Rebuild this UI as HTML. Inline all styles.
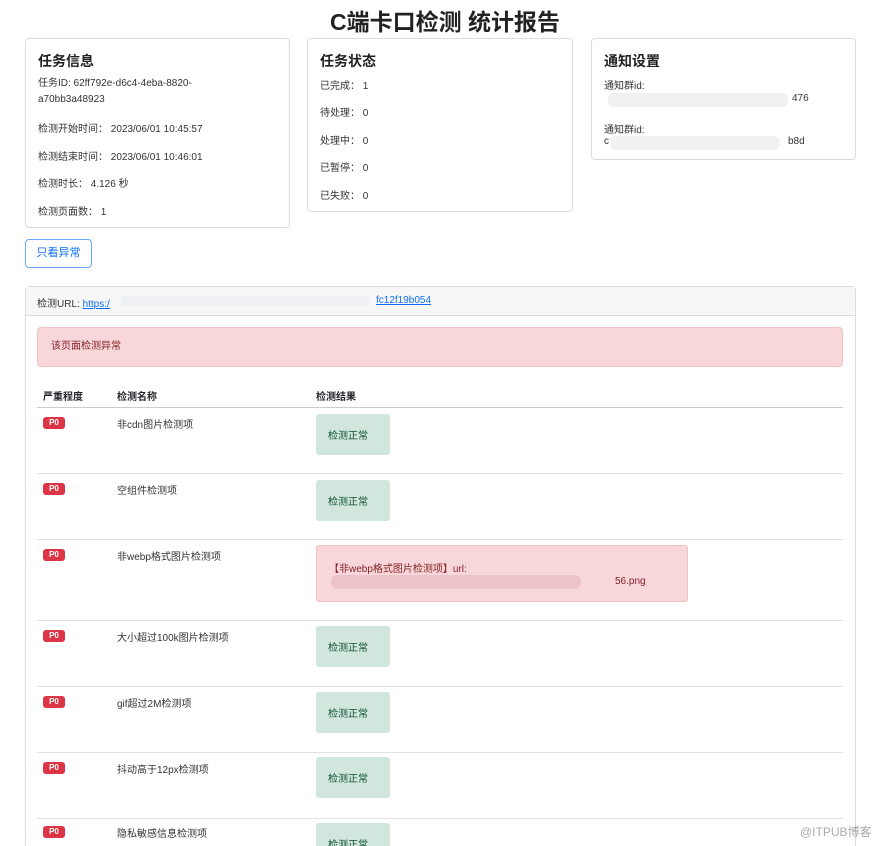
<!DOCTYPE html>
<html><head><meta charset="utf-8"><style>
*{box-sizing:border-box;margin:0;padding:0}
html,body{width:890px;height:846px;overflow:hidden}
body{background:#fff;font-family:"Liberation Sans","Noto Sans CJK SC",sans-serif;color:#212529;position:relative;font-size:10px}
.a{position:absolute;white-space:nowrap}
.card{position:absolute;border:1px solid #dcdcdc;border-radius:4px;background:#fff}
h1{position:absolute;left:0;width:890px;text-align:center;top:3px;font-size:23px;font-weight:bold;color:#222}
h2{font-size:14px;font-weight:bold;color:#222;position:absolute;left:12px;top:12px}
.t{font-size:10px;color:#333}
.line{position:absolute;left:37px;width:806px;height:1px;background:#e2e2e2}
.badge{position:absolute;left:43px;width:22px;height:12px;background:#dc3545;color:#fff;border-radius:3px;font-size:8px;font-weight:bold;text-align:center;line-height:12px}
.ok{position:absolute;left:316px;width:74px;height:41px;background:#d1e7dd;border-radius:3px;color:#0f5132;font-size:10px;display:flex;align-items:center;padding-left:12px}
.blur{position:absolute;background:#f1f1f1;border-radius:6px}
</style></head><body>
<h1>C端卡口检测 统计报告</h1>
<div class="card" style="left:25px;top:38px;width:265px;height:190px">
<h2>任务信息</h2>
<div class="a t" style="left:12px;top:37px;line-height:16px">任务ID: 62ff792e-d6c4-4eba-8820-<br>a70bb3a48923</div>
<div class="a t" style="left:12px;top:81px">检测开始时间： 2023/06/01 10:45:57</div>
<div class="a t" style="left:12px;top:109px">检测结束时间： 2023/06/01 10:46:01</div>
<div class="a t" style="left:12px;top:136px">检测时长： 4.126 秒</div>
<div class="a t" style="left:12px;top:164px">检测页面数： 1</div>
</div>
<div class="card" style="left:307px;top:38px;width:266px;height:174px">
<h2>任务状态</h2>
<div class="a t" style="left:12px;top:38px">已完成： 1</div>
<div class="a t" style="left:12px;top:65px">待处理： 0</div>
<div class="a t" style="left:12px;top:93px">处理中： 0</div>
<div class="a t" style="left:12px;top:120px">已暂停： 0</div>
<div class="a t" style="left:12px;top:148px">已失败： 0</div>
</div>
<div class="card" style="left:591px;top:38px;width:265px;height:122px">
<h2>通知设置</h2>
<div class="a t" style="left:12px;top:38px">通知群id:</div>
<div class="blur" style="left:16px;top:54px;width:180px;height:14px"></div>
<div class="a t" style="left:200px;top:54px">476</div>
<div class="a t" style="left:12px;top:82px">通知群id:</div>
<div class="a t" style="left:12px;top:97px">c</div>
<div class="blur" style="left:18px;top:97px;width:170px;height:14px"></div>
<div class="a t" style="left:196px;top:97px">b8d</div>
</div>
<div class="a" style="left:25px;top:239px;width:67px;height:29px;border:1px solid #6ea8fe;border-radius:4px;color:#0d6efd;font-size:11px;line-height:27px;text-align:center">只看异常</div>
<div class="card" style="left:25px;top:286px;width:831px;height:600px">
<div style="position:absolute;left:0;top:0;right:0;height:29px;background:#f7f7f7;border-bottom:1px solid #dcdcdc"></div>
</div>
<div class="a t" style="left:37px;top:295px">检测URL: <span style="color:#0d6efd;text-decoration:underline">https:/</span></div>
<div class="blur" style="left:120px;top:296px;width:250px;height:10px;background:#eef0f6"></div>
<div class="a t" style="left:376px;top:295px;color:#0d6efd;text-decoration:underline">fc12f19b054</div>
<div class="a" style="left:37px;top:327px;width:806px;height:40px;background:#f8d7da;border:1px solid #f1c0c5;border-radius:4px;color:#842029;font-size:10px;line-height:38px;padding-left:13px">该页面检测异常</div>
<div class="a" style="left:43px;top:388px;font-size:10px;font-weight:bold">严重程度</div>
<div class="a" style="left:117px;top:388px;font-size:10px;font-weight:bold">检测名称</div>
<div class="a" style="left:316px;top:388px;font-size:10px;font-weight:bold">检测结果</div>
<div class="line" style="top:407px;background:#ccc"></div>
<div class="badge" style="top:417px">P0</div><div class="a t" style="left:117px;top:416px">非cdn图片检测项</div><div class="ok" style="top:414px">检测正常</div>
<div class="line" style="top:473px"></div>
<div class="badge" style="top:483px">P0</div><div class="a t" style="left:117px;top:482px">空组件检测项</div><div class="ok" style="top:480px">检测正常</div>
<div class="line" style="top:539px"></div>
<div class="badge" style="top:549px">P0</div><div class="a t" style="left:117px;top:548px">非webp格式图片检测项</div>
<div class="a" style="left:316px;top:545px;width:372px;height:57px;background:#f8d7da;border:1px solid #f1c0c5;border-radius:3px;color:#842029;font-size:10px">
<div class="a" style="left:12px;top:14px">【非webp格式图片检测项】url:</div>
<div class="a" style="left:14px;top:29px;width:250px;height:14px;background:#ecc3c8;border-radius:6px"></div>
<div class="a" style="left:298px;top:30px">56.png</div></div>
<div class="line" style="top:620px"></div>
<div class="badge" style="top:630px">P0</div><div class="a t" style="left:117px;top:629px">大小超过100k图片检测项</div><div class="ok" style="top:626px">检测正常</div>
<div class="line" style="top:686px"></div>
<div class="badge" style="top:696px">P0</div><div class="a t" style="left:117px;top:695px">gif超过2M检测项</div><div class="ok" style="top:692px">检测正常</div>
<div class="line" style="top:752px"></div>
<div class="badge" style="top:762px">P0</div><div class="a t" style="left:117px;top:761px">抖动高于12px检测项</div><div class="ok" style="top:757px">检测正常</div>
<div class="line" style="top:818px"></div>
<div class="badge" style="top:826px">P0</div><div class="a t" style="left:117px;top:825px">隐私敏感信息检测项</div><div class="ok" style="top:823px">检测正常</div>
<div class="a" style="left:800px;top:823px;font-size:12px;color:#aaa">@ITPUB博客</div>
</body></html>
